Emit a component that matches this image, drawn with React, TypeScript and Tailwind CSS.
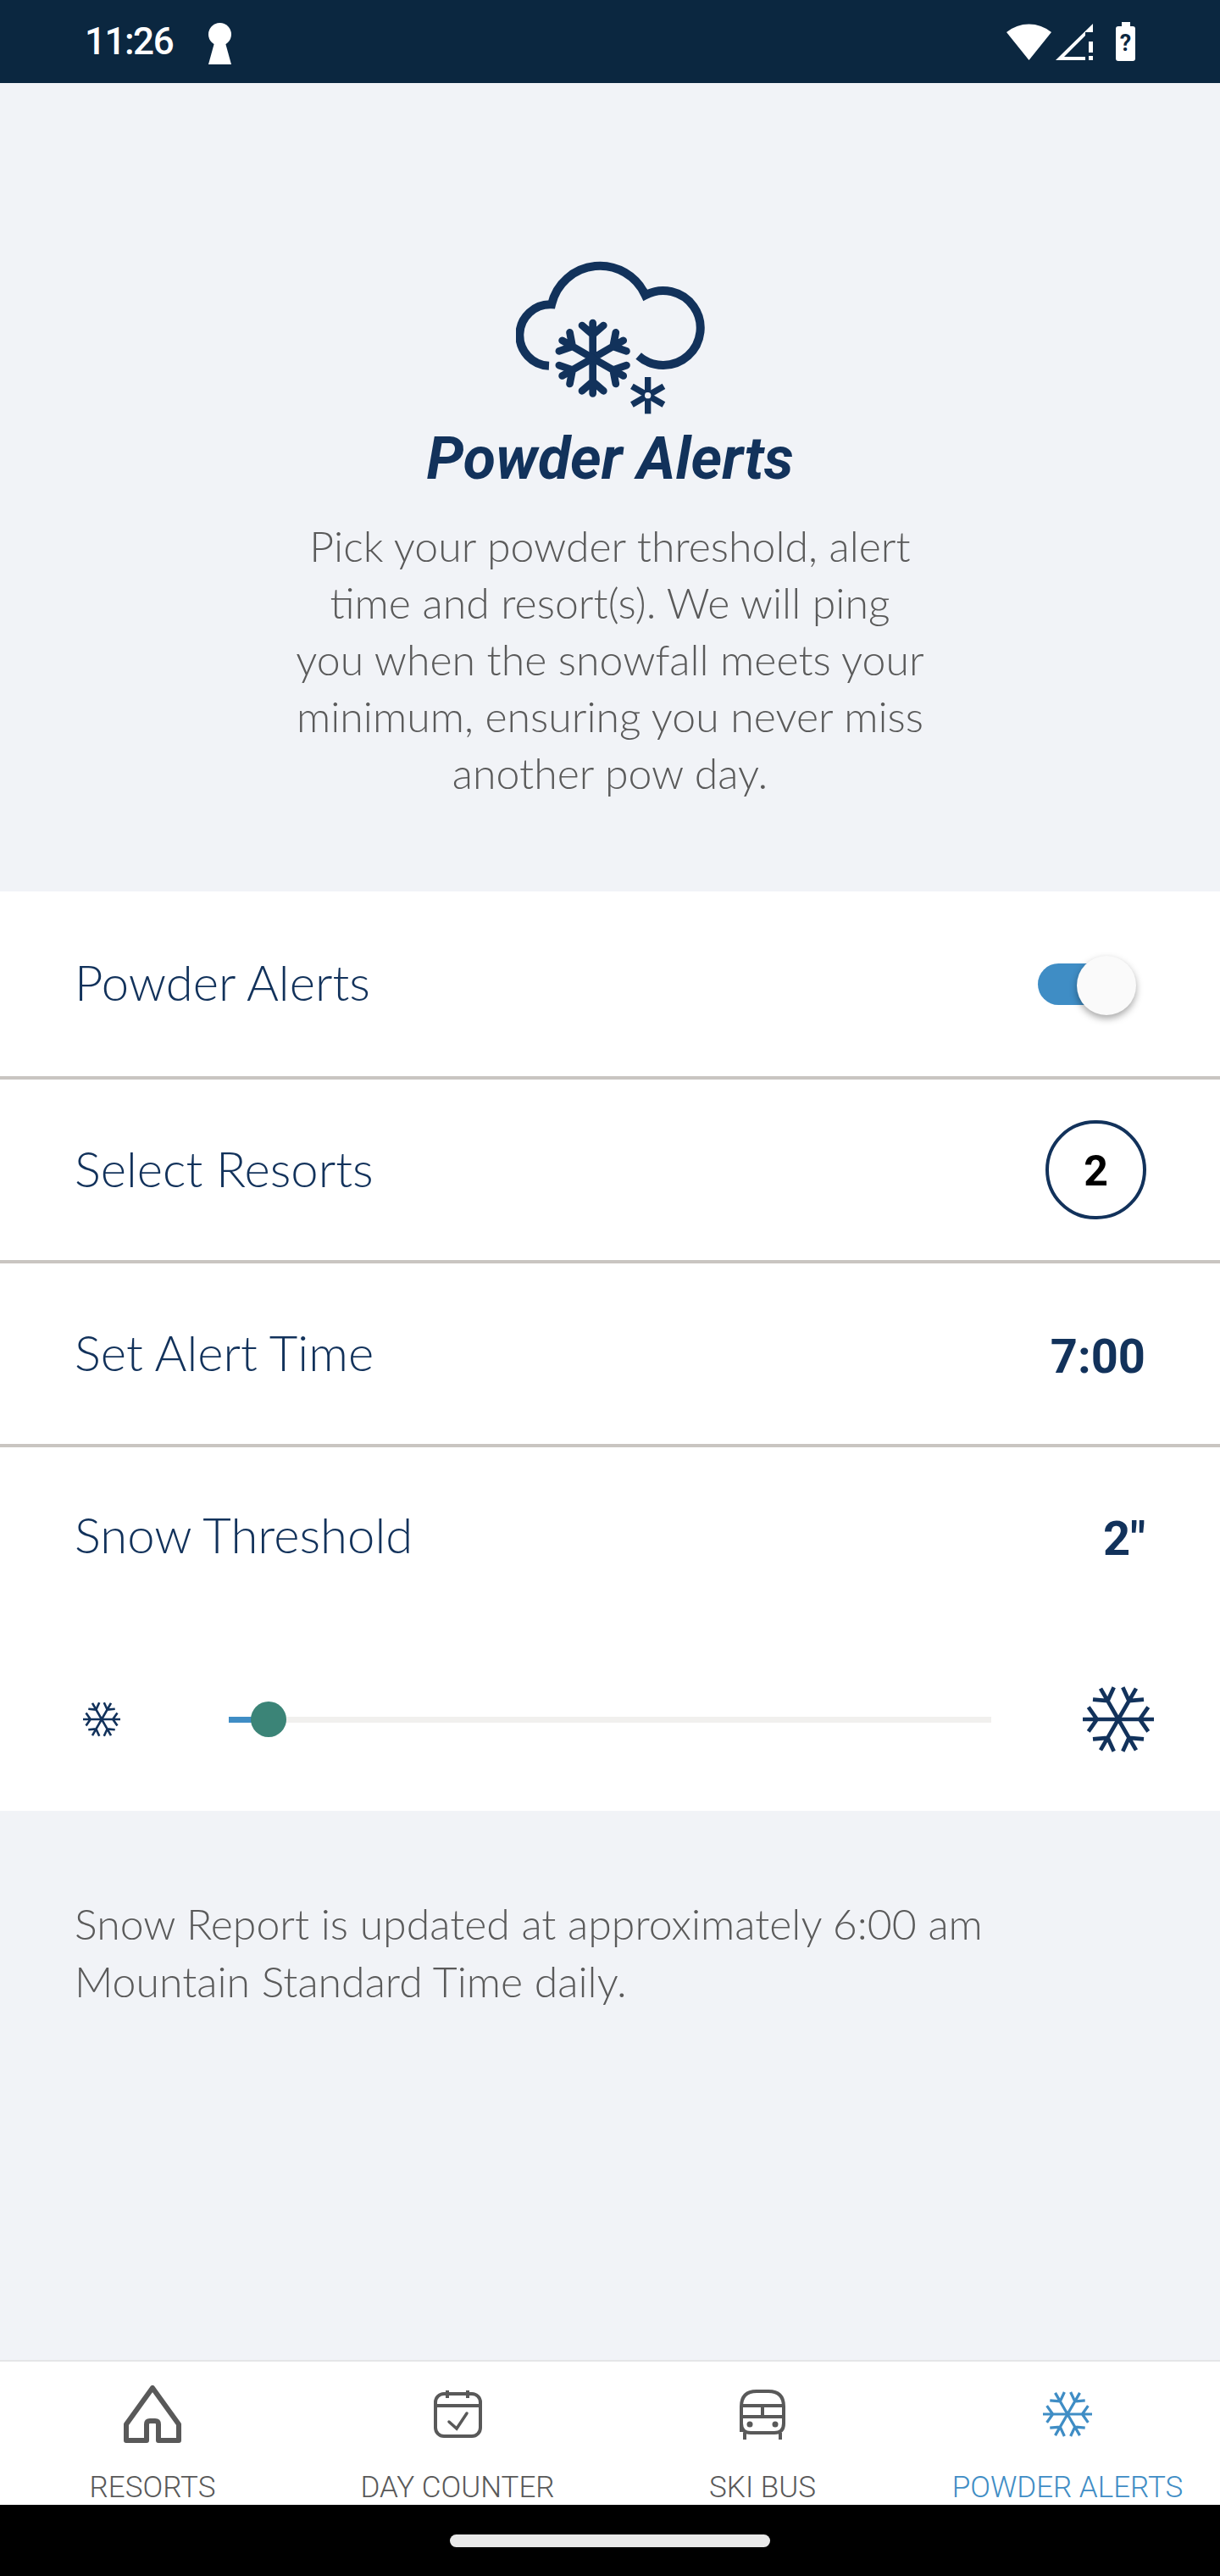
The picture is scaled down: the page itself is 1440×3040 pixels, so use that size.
const NAVY = '#12325b'

function Snowflake({ size, color, stroke = 5.6 }: { size: number; color: string; stroke?: number }) {
  return (
    <svg width={size} height={size} viewBox="0 0 100 100" fill="none" stroke={color} strokeWidth={stroke}>
      {[0, 60, 120, 180, 240, 300].map((a) => (
        <g key={a} transform={`rotate(${a} 50 50)`}>
          <path d="M50 50H100M80 50L92 33M80 50L92 67" />
        </g>
      ))}
    </svg>
  )
}

function CloudIcon() {
  return (
    <svg width="223" height="181" viewBox="384 84 669 543" fill="none" stroke={NAVY} strokeWidth="30">
      <path d="M501 455A106 106 0 0 1 510 238A176 176 0 0 1 842 205A132 132 0 1 1 818 420" />
      {[0, 60, 120, 180, 240, 300].map((a) => (
        <g key={a} transform={`rotate(${a} 656 428)`} strokeWidth="26" strokeLinecap="round">
          <path d="M656 428V303M656 345L618 312M656 345L694 312" />
        </g>
      ))}
      {[0, 60, 120].map((a) => (
        <path key={a} transform={`rotate(${a} 851 560)`} d="M851 495V625" strokeWidth="22" />
      ))}
      <circle cx="851" cy="560" r="11" fill="#f1f3f7" stroke="none" />
    </svg>
  )
}

function HomeIcon() {
  return (
    <svg width="68" height="68" viewBox="0 0 68 68" fill="none" stroke="#595959" strokeWidth="6" strokeLinejoin="round">
      <path d="M34 3L3 46V65H27V46Q27 42 31 42H37Q41 42 41 46V65H65V46Z" />
    </svg>
  )
}

function CalendarIcon() {
  return (
    <svg width="57" height="56" viewBox="0 0 57 56" fill="none" stroke="#595959" strokeWidth="4">
      <rect x="2" y="4" width="53" height="50" rx="10" />
      <path d="M2 18H55M16 0V9M40 0V9" />
      <path d="M18 37L27 45L39 27" strokeWidth="3.5" strokeLinecap="round" />
    </svg>
  )
}

function BusIcon() {
  return (
    <svg width="54" height="59" viewBox="0 0 54 59" fill="none" stroke="#595959" strokeWidth="4">
      <path d="M2 50V20Q2 2 20 2H34Q52 2 52 20V40Q52 51 41 51H13Q2 51 2 40Z" />
      <path d="M2 19H52M2 32H52M27 19V32M6 51V59M48 51V59" />
      <circle cx="12" cy="41" r="3.5" fill="#595959" stroke="none" />
      <circle cx="42" cy="41" r="3.5" fill="#595959" stroke="none" />
    </svg>
  )
}

export default function App() {
  const tabs = [
    { label: 'RESORTS', icon: <HomeIcon /> },
    { label: 'DAY COUNTER', icon: <CalendarIcon /> },
    { label: 'SKI BUS', icon: <BusIcon /> },
    { label: 'POWDER ALERTS', icon: <Snowflake size={58} color="#3f8dc5" />, active: true },
  ]

  return (
    <div className="flex h-[3040px] w-[1440px] flex-col bg-[#f1f3f7] font-['Lato',sans-serif]">
      {/* Status bar */}
      <div className="flex h-[98px] items-center justify-between bg-[#0b2740] pr-[100px] pl-[100px] text-white">
        <div className="flex items-center gap-[42px]">
          <span className="font-['Roboto',sans-serif] text-[44px] leading-none font-medium tracking-[-1.5px]">11:26</span>
          <svg width="27" height="49" viewBox="0 0 27 49" fill="white" className="mt-[5px]">
            <circle cx="13.5" cy="13.5" r="13.5" />
            <path d="M8 20H19L27 49H0Z" />
          </svg>
        </div>
        <div className="flex items-center">
          <svg width="53" height="44" viewBox="0 0 53 44" fill="white">
            <path d="M26.5 44L0 11A42 42 0 0 1 53 11Z" />
          </svg>
          <svg width="44" height="43" viewBox="0 0 44 43" fill="white" className="ml-[5px]">
            <path d="M44 0V10H35V14L10 39H35V43H0Z" />
            <path d="M39 21H44V34H39ZM39 38H44V43H39Z" />
          </svg>
          <div className="ml-[27px] flex flex-col items-center">
            <div className="h-[5px] w-[10px] bg-white" />
            <div className="flex h-[41px] w-[23px] items-center justify-center rounded-[3px] bg-white font-['Roboto',sans-serif] text-[27px] leading-none font-bold text-[#0b2740]">
              ?
            </div>
          </div>
        </div>
      </div>

      {/* Intro */}
      <div className="flex h-[954px] flex-col items-center pt-[210px]">
        <CloudIcon />
        <h1 className="mt-[14px] font-['Roboto',sans-serif] text-[70px] leading-[76px] font-bold text-[#12325b] italic">
          Powder Alerts
        </h1>
        <p className="mt-[32px] text-center text-[50px] leading-[67px] font-light whitespace-nowrap text-[#5a5a5a]">
          Pick your powder threshold, alert
          <br />
          time and resort(s). We will ping
          <br />
          you when the snowfall meets your
          <br />
          minimum, ensuring you never miss
          <br />
          another pow day.
        </p>
      </div>

      {/* Settings */}
      <div className="flex h-[222px] items-center justify-between border-b-4 border-[#c9c5c1] bg-white px-[88px]">
        <span className="pb-[5px] text-[58px] font-light text-[#12325b]">Powder Alerts</span>
        <div className="relative mr-[22px] h-[49px] w-[105px] rounded-full bg-[#3f8dc5]">
          <div className="absolute top-[-9px] right-[-11px] h-[70px] w-[70px] rounded-full bg-[#fafafa] shadow-[0_4px_8px_rgba(0,0,0,0.35)]" />
        </div>
      </div>
      <div className="flex h-[217px] items-center justify-between border-b-4 border-[#c9c5c1] bg-white pr-[87px] pl-[88px]">
        <span className="pb-[5px] text-[58px] font-light text-[#12325b]">Select Resorts</span>
        <div className="flex h-[117px] w-[119px] items-center justify-center rounded-full border-4 border-[#12325b] pt-[4px] font-['Roboto',sans-serif] text-[50px] font-bold text-black">
          2
        </div>
      </div>
      <div className="flex h-[217px] items-center justify-between border-b-4 border-[#c9c5c1] bg-white px-[88px]">
        <span className="pb-[5px] text-[58px] font-light text-[#12325b]">Set Alert Time</span>
        <span className="pt-[6px] font-['Roboto',sans-serif] text-[56px] font-bold text-[#12325b]">7:00</span>
      </div>
      <div className="h-[429px] bg-white">
        <div className="flex h-[210px] items-center justify-between px-[88px]">
          <span className="pb-[5px] text-[58px] font-light text-[#12325b]">Snow Threshold</span>
          <span className="pt-[6px] font-['Roboto',sans-serif] text-[56px] font-bold text-[#12325b]">2"</span>
        </div>
        <div className="flex items-center pt-[69px] pr-[78px] pl-[98px]">
          <Snowflake size={44} color={NAVY} stroke={6} />
          <div className="relative mr-[108px] ml-[128px] h-[7px] flex-1 bg-[#f1f0ee]">
            <div className="h-full w-[47px] bg-[#3f8dc5]" />
            <div className="absolute top-[-18px] left-[26px] h-[42px] w-[42px] rounded-full bg-[#3b8477]" />
          </div>
          <Snowflake size={84} color={NAVY} />
        </div>
      </div>

      {/* Note */}
      <div className="flex-1 px-[88px] pt-[100px]">
        <p className="text-[50px] leading-[67.5px] font-light text-[#5a5a5a]">
          Snow Report is updated at approximately 6:00 am
          <br />
          Mountain Standard Time daily.
        </p>
      </div>

      {/* Tab bar */}
      <div className="grid h-[171px] grid-cols-4 border-t-2 border-[#e4e5e7] bg-white font-['Roboto',sans-serif]">
        {tabs.map((t) => (
          <div key={t.label} className="flex flex-col items-center">
            <div className="flex h-[130px] items-center justify-center pb-[6px]">{t.icon}</div>
            <span className={`text-[35px] leading-[38px] font-[350] ${t.active ? 'text-[#3f8dc5]' : 'text-[#595959]'}`}>
              {t.label}
            </span>
          </div>
        ))}
      </div>
      <div className="flex h-[84px] items-center justify-center bg-black">
        <div className="h-[15px] w-[378px] rounded-full bg-[#e9e9e9]" />
      </div>
    </div>
  )
}
